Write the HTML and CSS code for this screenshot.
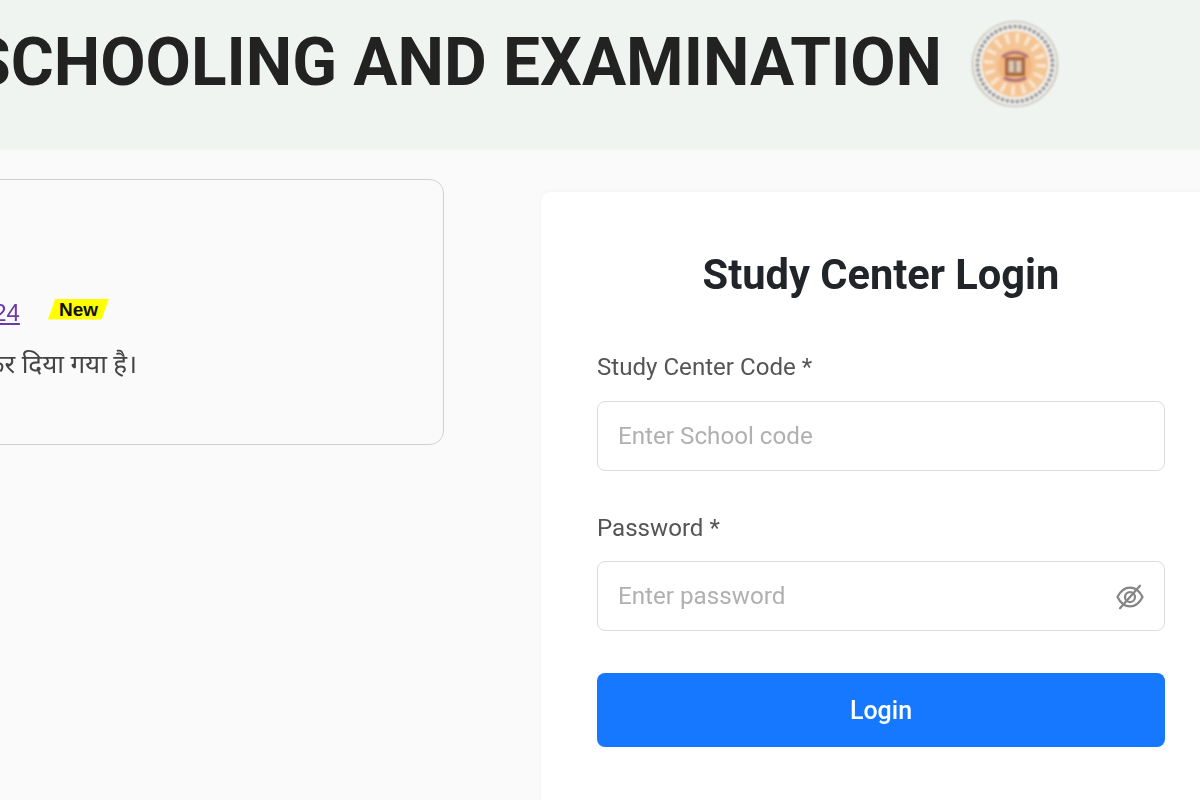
FILE: index.html
```html
<!DOCTYPE html>
<html lang="en">
<head>
  <meta charset="UTF-8">
  <meta name="viewport" content="width=device-width, initial-scale=1.0">
  <title>Study Center Login</title>
  <link rel="stylesheet" href="styles.css">
</head>
<body>

  <header class="topbar">
    <h1>SCHOOLING AND EXAMINATION</h1>
    <svg class="logo" width="90" height="90" viewBox="0 0 90 90">
      <g class="logo-art">
        <circle cx="45" cy="45" r="42.500" fill="#f1f2ec" stroke="#b5b0a2" stroke-width="1.200"/>
        <circle cx="45" cy="45" r="37.500" fill="none" stroke="#8f8a90" stroke-width="3.500" stroke-dasharray="3 2"/>
        <circle cx="45" cy="45" r="33" fill="#f4c596"/>
        <circle cx="45" cy="45" r="26" fill="none" stroke="#fbe6cd" stroke-width="10" stroke-dasharray="3.500 6.700"/>
        <circle cx="45" cy="47" r="17" fill="#f2b781"/>
        <path d="M32 38q13-9 26 0M34 59q11 5 22 0" fill="none" stroke="#a56a7c" stroke-width="2.500"/>
        <rect x="35" y="38" width="20" height="19" fill="#a9683f"/>
        <rect x="38.500" y="41.500" width="13" height="12" fill="#d9c8b4"/>
        <path d="M45 42v11" stroke="#86624e" stroke-width="1.500"/>
      </g>
    </svg>
  </header>

  <main class="content">
    <section class="notice">
      <p class="notice-line">
        <a href="#" class="notice-link">Notification 2024</a>
        <span class="badge">New</span>
      </p>
      <p class="notice-hindi">अधिसूचना जारी कर दिया गया है।</p>
    </section>

    <section class="login-card">
      <h2>Study Center Login</h2>
      <form>
        <div class="field">
          <label for="code">Study Center Code<span>*</span></label>
          <input type="text" id="code" placeholder="Enter School code">
        </div>
        <div class="field">
          <label for="password">Password<span>*</span></label>
          <div class="password-wrap">
            <input type="password" id="password" placeholder="Enter password">
            <svg class="eye" width="30" height="30" viewBox="0 0 24 24" fill="none" stroke="#858585" stroke-width="1.800" stroke-linecap="round" stroke-linejoin="round">
              <path d="M2 12c2.500-5 5.800-7.500 10-7.500s7.500 2.500 10 7.500c-2.500 5-5.800 7.500-10 7.500s-7.500-2.500-10-7.500z"/>
              <circle cx="12" cy="12" r="4"/>
              <path d="M4 21 20 3"/>
            </svg>
          </div>
        </div>
        <button type="button">Login</button>
      </form>
    </section>
  </main>

</body>
</html>
```

FILE: styles.css
```css
body {
  margin: 0;
  height: 800px;
  overflow: hidden;
  background: #fafafa;
  font-family: Roboto, "Noto Sans", sans-serif;
  color: #212529;
}

/* the reference is a slightly soft upscale */
.topbar,
.content {
  filter: blur(0.350px);
}

.topbar {
  box-sizing: border-box;
  height: 150px;
  padding: 0 140px 22px 0;
  background: #f0f4f1;
  display: flex;
  justify-content: flex-end;
  align-items: center;
  gap: 28px;
  white-space: nowrap;
}

.topbar h1 {
  margin: 0 0 2px;
  font-size: 65.800px;
  font-weight: 700;
  line-height: 1;
  color: #222;
}

.logo {
  flex: none;
}

.logo-art {
  filter: blur(1px);
}

.content {
  display: flex;
  align-items: flex-start;
  gap: 97px;
  margin-left: -20px;
  width: 1241px;
}

.notice {
  box-sizing: border-box;
  width: 464px;
  height: 266px;
  margin-top: 29px;
  padding-top: 113px;
  background: #fafafa;
  border: 1.500px solid #d0d0d0;
  border-radius: 14px;
  white-space: nowrap;
}

.notice p {
  margin: 0;
  display: flex;
  justify-content: flex-end;
  align-items: center;
}

.notice-line {
  padding-right: 334px;
  font-size: 24px;
  line-height: 40px;
}

.notice-link {
  color: #6a3aa8;
  font-family: "Liberation Sans", sans-serif;
}

.badge {
  margin-left: 28px;
  margin-bottom: 8px;
  padding: 0 11px;
  font-family: "Liberation Sans", sans-serif;
  font-size: 19px;
  font-weight: 700;
  line-height: 21px;
  color: #111;
  background: #ffff00;
  clip-path: polygon(12% 0, 100% 0, 88% 100%, 0 100%);
}

.notice .notice-hindi {
  padding-right: 306px;
  margin-top: 8px;
  font-size: 26px;
  line-height: 46px;
  color: #444;
}

.login-card {
  box-sizing: border-box;
  width: 680px;
  height: 640px;
  margin-top: 42px;
  padding: 56px;
  background: #fff;
  border-radius: 10px;
  box-shadow: 0 0 6px rgba(0,0,0,0.03);
}

.login-card h2 {
  margin: 0 0 50px;
  text-align: center;
  font-size: 41.600px;
  font-weight: 700;
  line-height: 54px;
}

.field {
  margin-bottom: 42px;
}

.field label {
  display: block;
  margin-bottom: 18px;
  font-size: 24.100px;
  line-height: 30px;
  color: #555;
}

.field:first-child label {
  margin-bottom: 19px;
}

.field label span {
  margin-left: 6px;
}

input {
  box-sizing: border-box;
  display: block;
  width: 100%;
  height: 70px;
  padding: 0 20px;
  border: 1.500px solid #dcdcdc;
  border-radius: 8px;
  background: #fff;
  font-family: Roboto, sans-serif;
  font-size: 24.200px;
}

input::placeholder {
  color: #b0b0b0;
}

.password-wrap {
  position: relative;
}

.eye {
  position: absolute;
  right: 20px;
  top: 21px;
}

button {
  display: block;
  width: 100%;
  height: 74px;
  border: none;
  border-radius: 8px;
  background: #1677ff;
  color: #fff;
  font-family: Roboto, sans-serif;
  font-size: 25px;
  font-weight: 500;
}
```
